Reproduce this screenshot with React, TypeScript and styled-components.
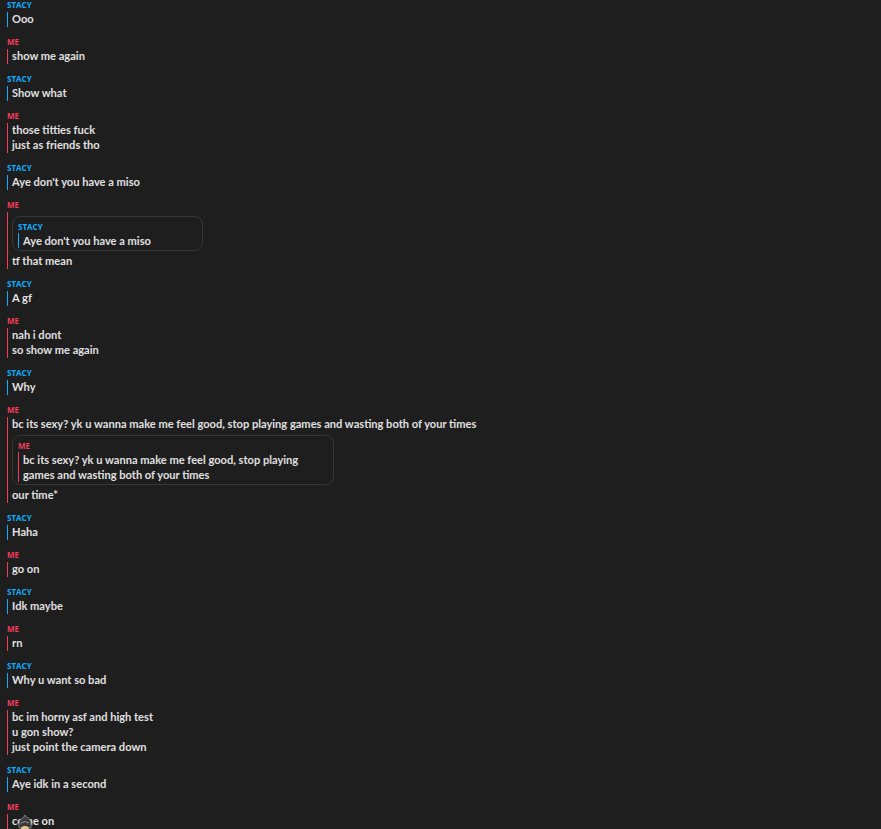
import { styled, createGlobalStyle } from "styled-components";

const GlobalStyle = createGlobalStyle`
    html, body {
        margin: 0;
        padding: 0;
        background-color: #1e1e1e;
    }
`;

const Chat = styled.div`
    position: relative;
    min-height: 829px;
    padding: 0 7px;
    display: flex;
    flex-direction: column;
    gap: 10px;
    background-color: #1e1e1e;
    font-family: Lato, "Open Sans", sans-serif;
    overflow: hidden;
`;

// one sender group: name on top, messages next to a coloured rule
const Group = styled.div`
    display: flex;
    flex-direction: column;
    gap: 2px;
`;

const Name = styled.div<{ $me: boolean }>`
    font-family: "Open Sans", sans-serif;
    font-size: 8px;
    line-height: 10px;
    font-weight: 700;
    color: ${(p) => (p.$me ? "#f23c57" : "#0eadff")};
`;

const Body = styled.div<{ $me: boolean }>`
    display: flex;
    flex-direction: column;
    align-items: flex-start;
    border-left: 1px solid ${(p) => (p.$me ? "#f23c57" : "#0eadff")};
    padding-left: 4px;
`;

const Line = styled.div`
    font-size: 11.1px;
    line-height: 13px;
    padding-bottom: 2px;
    font-weight: 700;
    color: #e0e0e0;
    white-space: nowrap;
`;

//quoted reply card
const Quote = styled.div<{ $w: number }>`
    width: ${(p) => p.$w}px;
    box-sizing: border-box;
    display: flex;
    flex-direction: column;
    gap: 1px;
    margin: 3px 0;
    padding: 5px 10px 2px 5px;
    border: 1px solid #383838;
    border-radius: 8px;

    &:first-child {
        margin-top: 4px;
    }
`;

const QuoteText = styled.div<{ $me: boolean }>`
    border-left: 1px solid ${(p) => (p.$me ? "#f23c57" : "#0eadff")};
    padding-left: 4px;
    font-size: 11.1px;
    line-height: 15px;
    font-weight: 700;
    color: #e0e0e0;
`;

const Avatar = styled.svg`
    position: absolute;
    left: 16px;
    top: 814px;
`;

type Msg = { me: boolean; lines: string[]; quote?: { me: boolean; text: string; width: number }; after?: string[] };

const messages: Msg[] = [
    { me: false, lines: ["Ooo"] },
    { me: true, lines: ["show me again"] },
    { me: false, lines: ["Show what"] },
    { me: true, lines: ["those titties fuck", "just as friends tho"] },
    { me: false, lines: ["Aye don't you have a miso"] },
    { me: true, lines: [], quote: { me: false, text: "Aye don't you have a miso", width: 191 }, after: ["tf that mean"] },
    { me: false, lines: ["A gf"] },
    { me: true, lines: ["nah i dont", "so show me again"] },
    { me: false, lines: ["Why"] },
    {
        me: true,
        lines: ["bc its sexy? yk u wanna make me feel good, stop playing games and wasting both of your times"],
        quote: { me: true, text: "bc its sexy? yk u wanna make me feel good, stop playing games and wasting both of your times", width: 322 },
        after: ["our time*"],
    },
    { me: false, lines: ["Haha"] },
    { me: true, lines: ["go on"] },
    { me: false, lines: ["Idk maybe"] },
    { me: true, lines: ["rn"] },
    { me: false, lines: ["Why u want so bad"] },
    { me: true, lines: ["bc im horny asf and high test", "u gon show?", "just point the camera down"] },
    { me: false, lines: ["Aye idk in a second"] },
    { me: true, lines: ["come on"] },
];

export default function App() {
    return (
        <Chat>
            <GlobalStyle />
            {messages.map((m, i) => (
                <Group key={i}>
                    <Name $me={m.me}>{m.me ? "ME" : "STACY"}</Name>
                    <Body $me={m.me}>
                        {m.lines.map((l, j) => (
                            <Line key={j}>{l}</Line>
                        ))}
                        {m.quote && (
                            <Quote $w={m.quote.width}>
                                <Name $me={m.quote.me}>{m.quote.me ? "ME" : "STACY"}</Name>
                                <QuoteText $me={m.quote.me}>{m.quote.text}</QuoteText>
                            </Quote>
                        )}
                        {m.after?.map((l, j) => (
                            <Line key={j}>{l}</Line>
                        ))}
                    </Body>
                </Group>
            ))}
            {/* little bitmoji peeking over the last line */}
            <Avatar width="18" height="16" viewBox="0 0 18 16">
                <path d="M3 14 Q2 5 8 3 L9 1 L10 3 Q16 4 15 14 Z" fill="#3b3b3b" stroke="#8a8a8a" strokeWidth="0.8" />
                <path d="M5 9 Q9 6 13 9" fill="none" stroke="#a9a9a9" strokeWidth="0.8" />
                <ellipse cx="9" cy="15" rx="4" ry="3" fill="#e8c98a" />
            </Avatar>
        </Chat>
    );
}
